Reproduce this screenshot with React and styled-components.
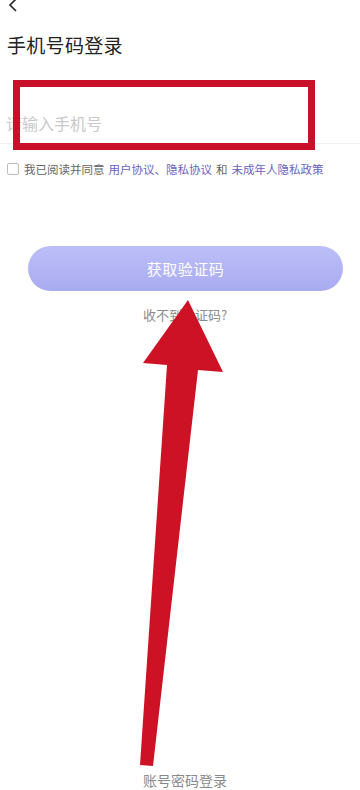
import React from "react";
import styled, { createGlobalStyle } from "styled-components";

const Global = createGlobalStyle`
  html, body { margin: 0; padding: 0; background: #fff; }
  body { font-family: "Noto Sans CJK SC", "Noto Sans", sans-serif; }
`;

const Page = styled.div`
  position: relative;
  width: 360px;
  height: 790px;
  overflow: hidden;
  display: flex;
  flex-direction: column;
  background: #fff;
`;

const Back = styled.div`
  height: 14px;
  padding-left: 8px;
  margin-top: -2px;
  display: flex;
  align-items: center;
`;

const Title = styled.h1`
  margin: 22px 0 0 7px;
  font-size: 19px;
  line-height: 21px;
  font-weight: 400;
  color: #222;
  letter-spacing: 0.3px;
`;

const InputRow = styled.div`
  margin-top: 60px;
  height: 28px;
  padding-left: 6px;
  border-bottom: 1px solid #f0f0f2;
  display: flex;
  align-items: flex-start;
`;

const Placeholder = styled.span`
  font-size: 16px;
  line-height: 16px;
  color: #c9c9cc;
`;

const Agree = styled.div`
  margin-top: 18px;
  padding-left: 7px;
  display: flex;
  align-items: center;
  font-size: 11.5px;
  line-height: 14px;
  color: #666;
  white-space: nowrap;
`;

const Box = styled.span`
  width: 10px;
  height: 10px;
  border: 1px solid #bbb;
  border-radius: 2px;
  margin-right: 5px;
`;

const Link = styled.span`
  color: ${p => p.$gray ? "#666" : "#6a62be"};
  margin-left: ${p => p.$gap || 0}px;
`;

const Button = styled.button`
  margin: 70px 0 0 28px;
  width: 315px;
  height: 45px;
  border: none;
  border-radius: 23px;
  background: linear-gradient(180deg, #bcbff9 0%, #a9abf0 100%);
  color: #fff;
  font-family: inherit;
  font-size: 15px;
  letter-spacing: 0.5px;
  display: flex;
  align-items: center;
  justify-content: center;
`;

const Help = styled.div`
  margin-top: 17px;
  padding-left: 10px;
  text-align: center;
  font-size: 13px;
  line-height: 14px;
  color: #8a8a8a;
`;

const Bottom = styled.div`
  margin-top: auto;
  margin-bottom: 2px;
  padding-left: 10px;
  text-align: center;
  font-size: 14px;
  line-height: 16px;
  color: #8a8a8a;
`;

const Highlight = styled.div`
  position: absolute;
  left: 13px;
  top: 80px;
  width: 302px;
  height: 70px;
  box-sizing: border-box;
  border: 7px solid #c8102a;
`;

const ArrowSvg = styled.svg`
  position: absolute;
  left: 0;
  top: 0;
`;

export default function App() {
  return (
    <>
      <Global />
      <Page>
        <Back>
          <svg width="10" height="14" viewBox="0 0 10 14">
            <path d="M8 1 L2 7 L8 13" fill="none" stroke="#222" strokeWidth="1.6" />
          </svg>
        </Back>
        <Title>手机号码登录</Title>
        <InputRow>
          <Placeholder>请输入手机号</Placeholder>
        </InputRow>
        <Agree>
          <Box />
          我已阅读并同意
          <Link $gap={4}>用户协议、隐私协议</Link>
          <Link $gray $gap={4}>和</Link>
          <Link $gap={4}>未成年人隐私政策</Link>
        </Agree>
        <Button>获取验证码</Button>
        <Help>收不到验证码?</Help>
        <Bottom>账号密码登录</Bottom>
        <Highlight />
        <ArrowSvg width="360" height="790" viewBox="0 0 360 790">
          <polygon
            points="188,300 223,372 198,370 153,766 140,765 167,365 143,363"
            fill="#cc1224"
          />
        </ArrowSvg>
      </Page>
    </>
  );
}
